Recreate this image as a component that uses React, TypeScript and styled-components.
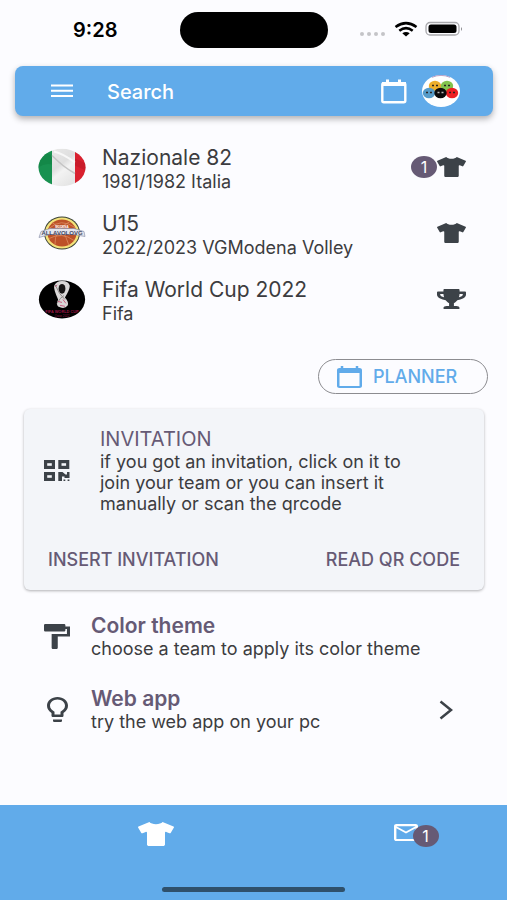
import React from "react";
import styled, { createGlobalStyle } from "styled-components";
import { FaTrophy, FaTshirt } from "react-icons/fa";
import {
  MdCalendarToday,
  MdFormatPaint,
  MdLightbulbOutline,
  MdMailOutline,
} from "react-icons/md";

const blue = "#61abea";
const ink = "#3c4248";
const plum = "#665a75";
const text = "#3c3c40";

const GlobalStyle = createGlobalStyle`
  * { box-sizing: border-box; }
  body {
    margin: 0;
    background: #fcfcff;
    color: ${text};
    font-family: Inter, "Liberation Sans", sans-serif;
  }
  button, input { font: inherit; color: inherit; border: 0; background: none; padding: 0; margin: 0; }
  button { cursor: pointer; }
  h2, p, ul { margin: 0; padding: 0; }
`;

const Screen = styled.div`
  min-height: 100vh;
  display: flex;
  flex-direction: column;
`;

const Glyph = styled.span<{ $w: number; $h: number; $color?: string }>`
  display: flex;
  flex: none;
  color: ${(p) => p.$color ?? ink};
  svg {
    display: block;
    width: ${(p) => p.$w}px;
    height: ${(p) => p.$h}px;
  }
`;

const StatusBar = styled.div`
  display: grid;
  grid-template-columns: 1fr 148px 1fr;
  align-items: center;
  height: 66px;
  padding: 0 32px 6px;
`;

const Clock = styled.time`
  padding-left: 41px;
  font-size: 20px;
  line-height: 24px;
  font-weight: 600;
  color: #000;
`;

const Island = styled.div`
  height: 36px;
  border-radius: 18px;
  background: #000;
`;

const Signals = styled.div`
  display: flex;
  justify-content: flex-end;
  align-items: center;
  padding-right: 12px;
`;

const SearchBar = styled.header`
  display: flex;
  align-items: center;
  height: 50px;
  margin: 0 14px 0 15px;
  padding: 0 33px 0 36px;
  border-radius: 8px;
  background: ${blue};
  box-shadow: 0 3px 6px rgba(0, 0, 0, 0.3);
`;

const SearchInput = styled.input`
  flex: 1;
  min-width: 0;
  margin-left: 34px;
  padding-top: 2px;
  font-size: 20px;
  line-height: 24px;
  font-weight: 500;
  color: #fff;
  outline: none;
  &::placeholder { color: #fff; opacity: 1; }
`;

const ProfileButton = styled.button`
  margin-left: 15px;
`;

const TeamList = styled.ul`
  list-style: none;
  padding-top: 18px;
`;

const TeamRow = styled.li`
  display: flex;
  align-items: center;
  height: 66px;
  padding: 0 41px 0 38px;
`;

const TeamText = styled.div`
  flex: 1;
  margin-left: 16px;
  padding-top: 2px;
`;

const TeamName = styled.h2`
  font-size: 21px;
  line-height: 26px;
  font-weight: 400;
`;

const Detail = styled.p`
  font-size: 18px;
  line-height: 21px;
`;

const Badge = styled.span`
  display: grid;
  place-items: center;
  width: 26px;
  height: 22px;
  border-radius: 50%;
  background: ${plum};
  color: #fff;
  font-size: 16px;
  line-height: 22px;
`;

const PlannerButton = styled.button`
  align-self: flex-end;
  display: flex;
  align-items: center;
  gap: 11px;
  width: 170px;
  height: 35px;
  margin: 27px 19px 0 0;
  padding-left: 18px;
  border: 1px solid #8c8c90;
  border-radius: 18px;
  color: ${blue};
  font-size: 18px;
  line-height: 20px;
  font-weight: 500;
`;

const Card = styled.section`
  margin: 15px 23px 0 24px;
  padding: 18px 24px 18px 20px;
  border-radius: 6px;
  background: #f3f5f9;
  box-shadow: 0 1px 3px rgba(0, 0, 0, 0.3);
`;

const CardBody = styled.div`
  display: flex;
  align-items: center;
  gap: 30px;
`;

const CardText = styled.div`
  flex: 1;
  padding-right: 44px;
`;

const CardTitle = styled.h2`
  font-size: 20px;
  line-height: 24px;
  font-weight: 400;
  color: ${plum};
`;

const CardActions = styled.div`
  display: flex;
  justify-content: space-between;
  margin-top: 34px;
  padding-left: 4px;
`;

const TextButton = styled.button`
  font-size: 18px;
  line-height: 24px;
  font-weight: 500;
  color: ${plum};
`;

const Options = styled.div`
  flex: 1;
  padding: 10px 54px 40px 43px;
`;

const Option = styled.button`
  display: flex;
  align-items: center;
  width: 100%;
  height: 73px;
  text-align: left;
`;

const OptionIcon = styled.span`
  display: flex;
  justify-content: center;
  width: 28px;
  margin-right: 20px;
`;

const OptionText = styled.span`
  flex: 1;
  display: flex;
  flex-direction: column;
`;

const OptionTitle = styled.strong`
  font-size: 21px;
  line-height: 25px;
  font-weight: 600;
  color: ${plum};
`;

const OptionDetail = styled.span`
  font-size: 18px;
  line-height: 22px;
`;

const BottomBar = styled.nav`
  display: grid;
  grid-template-columns: 8fr 5fr;
  grid-template-rows: 1fr auto;
  height: 95px;
  padding-bottom: 8px;
  background: ${blue};
`;

const Tab = styled.button`
  display: flex;
  justify-content: center;
  align-items: flex-start;
  padding-top: 17px;
`;

const MailMark = styled.span`
  position: relative;
  display: flex;
  margin: 2px 8px 0 0;
`;

const MailBadge = styled(Badge)`
  position: absolute;
  left: 19px;
  top: 1px;
`;

const HomeIndicator = styled.div`
  grid-column: 1 / -1;
  justify-self: center;
  width: 36%;
  height: 5px;
  border-radius: 3px;
  background: #2f506b;
`;

const StatusIcons = () => (
  <svg viewBox="0 0 104 18" aria-hidden="true">
    <g fill="#c4c4c8">
      <circle cx="3" cy="13" r="2" />
      <circle cx="10" cy="13" r="2" />
      <circle cx="17" cy="13" r="2" />
      <circle cx="24" cy="13" r="2" />
    </g>
    <g fill="none" stroke="#000" strokeWidth="2.600">
      <path d="M36.500 6Q47 -1.800 57.500 6" />
      <path d="M40.300 9.800Q47 4.600 53.700 9.800" />
    </g>
    <path d="M43.300 12.200Q47 9.600 50.700 12.200L47 15.500Z" />
    <rect x="67" y="1.500" width="33" height="12.500" rx="4" fill="none" stroke="#a8a8ac" strokeWidth="1.300" />
    <rect x="69.500" y="3.500" width="28" height="8.500" rx="2.500" />
    <path d="M102 6Q104 8 102 10Z" fill="#88888c" />
  </svg>
);

const MenuIcon = () => (
  <svg viewBox="0 0 22 14" aria-hidden="true">
    <path d="M0 1.500H22M0 6.700H22M0 12H22" stroke="#fff" strokeWidth="2" />
  </svg>
);

const CalendarIcon = () => (
  <svg viewBox="0 0 26 25" aria-hidden="true">
    <rect x="1.300" y="4.200" width="23" height="19" rx="1.500" fill="none" stroke="#fff" strokeWidth="2.400" />
    <path d="M1 5H25" stroke="#fff" strokeWidth="4" />
    <path d="M6.500 0.500V4M18.500 0.500V4" stroke="#fff" strokeWidth="3" />
  </svg>
);

const QrIcon = () => (
  <svg viewBox="0 0 26 22" aria-hidden="true" fill="currentColor">
    <g fill="none" stroke="currentColor" strokeWidth="3.200">
      <rect x="1.600" y="1.600" width="7.800" height="5.800" />
      <rect x="15.900" y="1.600" width="7.800" height="5.800" />
      <rect x="1.600" y="13.600" width="7.800" height="5.800" />
    </g>
    <path d="M14.300 12H18.500L21.500 14.500H23V12H25.500V18H20.500V16.500H18V21H14.300Z" />
    <path d="M19.500 19.500H21.300V21H19.500ZM23.600 19.500H25.400V21H23.600Z" />
  </svg>
);

const ChevronIcon = () => (
  <svg viewBox="0 0 14 20" aria-hidden="true">
    <path d="M1.500 1.500L12 10L1.500 18.500" fill="none" stroke="currentColor" strokeWidth="2.500" />
  </svg>
);

const Faces = () => (
  <svg viewBox="0 0 38 32" aria-hidden="true">
    <ellipse cx="19" cy="16" rx="19" ry="16" fill="#fff" />
    <path d="M10 2.300Q19 -1.500 28 2.300" fill="none" stroke="#a889b8" strokeWidth="0.800" />
    {[
      [13, 11, "#edae2c"],
      [25, 11, "#83c34d"],
      [7, 18, "#569bc9"],
      [30, 18, "#ed2024"],
      [18.5, 18, "#0b0b0d"],
    ].map(([x, y, c]) => (
      <g key={String(c)}>
        <ellipse cx={x} cy={y} rx="6.200" ry="5.300" fill={String(c)} />
        <path
          d={`M${Number(x) - 3} ${Number(y) - 0.5}h2M${Number(x) + 1} ${Number(y) - 0.5}h2`}
          stroke={c === "#0b0b0d" ? "#bbb" : "#2b2320"}
          strokeWidth="1.300"
        />
      </g>
    ))}
  </svg>
);

const ItalyFlag = () => (
  <svg viewBox="0 0 48 38" aria-hidden="true">
    <defs>
      <clipPath id="flagClip"><ellipse cx="24" cy="19" rx="23.500" ry="18.800" /></clipPath>
      <linearGradient id="cloth" x1="0" y1="0" x2="1" y2="1">
        <stop offset="0" stopColor="#eeeeee" />
        <stop offset="0.450" stopColor="#dfdfdf" />
        <stop offset="0.550" stopColor="#f3f3f3" />
        <stop offset="1" stopColor="#dadada" />
      </linearGradient>
    </defs>
    <g clipPath="url(#flagClip)">
      <rect width="48" height="38" fill="url(#cloth)" />
      <rect width="14" height="38" fill="#189150" />
      <rect x="37" width="11" height="38" fill="#d9202f" />
      <path d="M0 0L14 7V16Q7 14 0 19Z" fill="#0d7f40" opacity="0.500" />
      <path d="M14 7Q20 13 25 17T37 25" fill="none" stroke="#c4c4c4" strokeWidth="1.500" />
      <path d="M16 3Q25 5 37 14" fill="none" stroke="#f8f8f8" strokeWidth="2" />
      <path d="M37 10L48 15V22L37 17Z" fill="#ba1625" opacity="0.500" />
    </g>
  </svg>
);

const VolleyCrest = () => (
  <svg viewBox="0 0 48 38" aria-hidden="true">
    <ellipse cx="24" cy="18.500" rx="18" ry="16.500" fill="#394136" />
    <ellipse cx="24" cy="18.500" rx="17" ry="15.600" fill="#f3e27a" />
    <ellipse cx="24" cy="18.500" rx="14.500" ry="13.600" fill="#bd5128" />
    <path
      d="M11 14Q23 3 37 13M14 8Q26 14 31 31M11 24Q24 17 36 26M32 7Q16 15 17 30"
      fill="none" stroke="#dc8d62" strokeWidth="0.800"
    />
    <path d="M3 17L12 14L36 14L46 17L47 22L36 20L12 20L1 23Z" fill="#e4e5ed" stroke="#7c83a0" strokeWidth="0.600" />
    <text x="24" y="20" textAnchor="middle" fontFamily="Liberation Sans, sans-serif" fontSize="6" fontWeight="700" fill="#424865">ALLAVOLOVG</text>
    <text x="24" y="13" textAnchor="middle" fontFamily="Liberation Sans, sans-serif" fontSize="3" fontWeight="700" fill="#fff">MODENA</text>
  </svg>
);

const WorldCup = () => (
  <svg viewBox="0 0 48 40" aria-hidden="true">
    <ellipse cx="24" cy="20" rx="23.700" ry="19.500" fill="#000" />
    <path d="M20 20Q15 9 16 6Q18 1 24 1Q31 1 32 6Q32 10 27 18Q31 22 30 26Q27 30 22 28Q17 27 20 20Z" fill="#d9d7d7" />
    <ellipse cx="24" cy="9" rx="3.500" ry="5" fill="#171515" />
    <path d="M17 5Q21 15 27 20M19 24Q22 18 26 16" stroke="#8c8786" strokeWidth="1" fill="none" />
    <path d="M20 22L24 23M25 20L28 24M22 26L27 27M17 7L19 5" stroke="#c75d80" strokeWidth="1" />
    <text x="24" y="34" textAnchor="middle" fontFamily="Liberation Sans, sans-serif" fontSize="4" fontWeight="700" fill="#9c1746">FIFA WORLD CUP</text>
    <text x="24" y="38" textAnchor="middle" fontFamily="Liberation Sans, sans-serif" fontSize="3" fill="#9c1746">Qatar 2022</text>
  </svg>
);

const teams = [
  { name: "Nazionale 82", detail: "1981/1982 Italia", Logo: ItalyFlag, Mark: FaTshirt, width: 29, count: 1 },
  { name: "U15", detail: "2022/2023 VGModena Volley", Logo: VolleyCrest, Mark: FaTshirt, width: 29, count: 0 },
  { name: "Fifa World Cup 2022", detail: "Fifa", Logo: WorldCup, Mark: FaTrophy, width: 29, count: 0 },
];

export default function App() {
  return (
    <Screen>
      <GlobalStyle />
      <StatusBar>
        <Clock>9:28</Clock>
        <Island />
        <Signals>
          <Glyph $w={104} $h={18}><StatusIcons /></Glyph>
        </Signals>
      </StatusBar>
      <SearchBar>
        <button aria-label="Menu"><Glyph $w={22} $h={14}><MenuIcon /></Glyph></button>
        <SearchInput type="search" placeholder="Search" aria-label="Search" />
        <button aria-label="Calendar"><Glyph $w={26} $h={25}><CalendarIcon /></Glyph></button>
        <ProfileButton aria-label="Profile"><Glyph $w={38} $h={32}><Faces /></Glyph></ProfileButton>
      </SearchBar>
      <TeamList>
        {teams.map(({ name, detail, Logo, Mark, width, count }) => (
          <TeamRow key={name}>
            <Glyph $w={48} $h={39}><Logo /></Glyph>
            <TeamText>
              <TeamName>{name}</TeamName>
              <Detail>{detail}</Detail>
            </TeamText>
            {count > 0 && <Badge>{count}</Badge>}
            <Glyph $w={width} $h={20}><Mark preserveAspectRatio="none" /></Glyph>
          </TeamRow>
        ))}
      </TeamList>
      <PlannerButton>
        <Glyph $w={25} $h={22} $color={blue}><MdCalendarToday viewBox="2 1 20 22" preserveAspectRatio="none" /></Glyph>
        PLANNER
      </PlannerButton>
      <Card>
        <CardBody>
          <Glyph $w={26} $h={22}><QrIcon /></Glyph>
          <CardText>
            <CardTitle>INVITATION</CardTitle>
            <Detail>
              if you got an invitation, click on it to join your team or you can insert it manually or scan the qrcode
            </Detail>
          </CardText>
        </CardBody>
        <CardActions>
          <TextButton>INSERT INVITATION</TextButton>
          <TextButton>READ QR CODE</TextButton>
        </CardActions>
      </Card>
      <Options>
        <Option>
          <OptionIcon><Glyph $w={26} $h={25}><MdFormatPaint viewBox="4 2 17 20" preserveAspectRatio="none" /></Glyph></OptionIcon>
          <OptionText>
            <OptionTitle>Color theme</OptionTitle>
            <OptionDetail>choose a team to apply its color theme</OptionDetail>
          </OptionText>
        </Option>
        <Option>
          <OptionIcon><Glyph $w={21} $h={25}><MdLightbulbOutline viewBox="5 2 14 20" preserveAspectRatio="none" /></Glyph></OptionIcon>
          <OptionText>
            <OptionTitle>Web app</OptionTitle>
            <OptionDetail>try the web app on your pc</OptionDetail>
          </OptionText>
          <Glyph $w={14} $h={20}><ChevronIcon /></Glyph>
        </Option>
      </Options>
      <BottomBar>
        <Tab aria-label="Teams"><Glyph $w={36} $h={24} $color="#fff"><FaTshirt preserveAspectRatio="none" /></Glyph></Tab>
        <Tab aria-label="Messages">
          <MailMark>
            <Glyph $w={24} $h={17} $color="#fff"><MdMailOutline viewBox="2 4 20 16" preserveAspectRatio="none" /></Glyph>
            <MailBadge>1</MailBadge>
          </MailMark>
        </Tab>
        <HomeIndicator />
      </BottomBar>
    </Screen>
  );
}
